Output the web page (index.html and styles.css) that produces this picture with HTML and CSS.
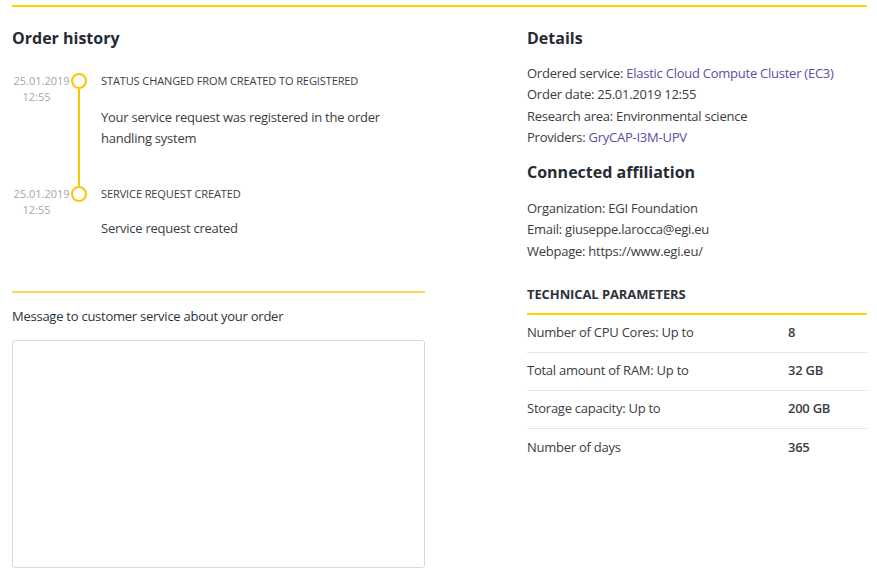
FILE: index.html
```html
<!DOCTYPE html>
<html lang="en">
<head>
<meta charset="utf-8">
<title>Order</title>
<link rel="stylesheet" href="styles.css">
</head>
<body>
<div class="page">
  <div class="layout">
    <section class="left">
      <h2 class="heading">Order history</h2>
      <ul class="timeline">
        <li class="event">
          <div class="when">25.01.2019<br><span class="time">12:55</span></div>
          <div class="marker"><span class="dot"></span><span class="line"></span></div>
          <div class="what">
            <div class="status">STATUS CHANGED FROM CREATED TO REGISTERED</div>
            <p class="msg">Your service request was registered in the order handling system</p>
          </div>
        </li>
        <li class="event last">
          <div class="when">25.01.2019<br><span class="time">12:55</span></div>
          <div class="marker"><span class="dot"></span></div>
          <div class="what">
            <div class="status">SERVICE REQUEST CREATED</div>
            <p class="msg">Service request created</p>
          </div>
        </li>
      </ul>
      <div class="message">
        <label class="msg-label" for="m">Message to customer service about your order</label>
        <textarea id="m" class="msg-box"></textarea>
      </div>
    </section>
    <section class="right">
      <h2 class="heading">Details</h2>
      <ul class="info">
        <li>Ordered service: <a class="link" href="#">Elastic Cloud Compute Cluster (EC3)</a></li>
        <li>Order date: 25.01.2019 12:55</li>
        <li>Research area: Environmental science</li>
        <li>Providers: <a class="link" href="#">GryCAP-I3M-UPV</a></li>
      </ul>
      <h2 class="heading sub">Connected affiliation</h2>
      <ul class="info aff">
        <li>Organization: EGI Foundation</li>
        <li>Email: giuseppe.larocca@egi.eu</li>
        <li>Webpage: https://www.egi.eu/</li>
      </ul>
      <h3 class="tech-title">TECHNICAL PARAMETERS</h3>
      <div class="params">
        <div class="prow"><span class="pname">Number of CPU Cores: Up to</span><span class="pval">8</span></div>
        <div class="prow"><span class="pname">Total amount of RAM: Up to</span><span class="pval">32 GB</span></div>
        <div class="prow"><span class="pname">Storage capacity: Up to</span><span class="pval">200 GB</span></div>
        <div class="prow"><span class="pname">Number of days</span><span class="pval">365</span></div>
      </div>
    </section>
  </div>
</div>
</body>
</html>
```

FILE: styles.css
```css
* { box-sizing: border-box; }
html, body { margin: 0; padding: 0; background: #fff; }
body {
  font-family: "Open Sans", "Noto Sans", sans-serif;
  color: #3a3d42;
  font-size: 13px;
  letter-spacing: -0.25px;
}
.page {
  padding: 0 10px 0 12px;
}
.layout {
  border-top: 2px solid #ffd200;
  margin-top: 5px;
  display: grid;
  grid-template-columns: 413px 340px;
  column-gap: 102px;
}
.heading {
  margin: 0;
  font-size: 16px;
  font-weight: 700;
  color: #262b33;
  line-height: 20px;
  letter-spacing: 0;
}
.left .heading, .right > .heading:first-child { margin-top: 21px; }
.timeline {
  list-style: none;
  margin: 22px 0 0 0;
  padding: 0;
}
.event {
  display: flex;
  align-items: stretch;
}
.when {
  width: 59px;
  flex: none;
  text-align: center;
  font-size: 11px;
  line-height: 16px;
  color: #a3a6ab;
  padding-top: 3px;
  white-space: nowrap;
  letter-spacing: 0;
}
.time { padding-right: 10px; }
.marker {
  width: 16px;
  flex: none;
  display: flex;
  flex-direction: column;
  align-items: center;
  margin-right: 14px;
}
.dot {
  width: 16px;
  height: 16px;
  border: 2px solid #ffc400;
  border-radius: 50%;
  flex: none;
  margin-top: 3px;
}
.line {
  width: 2px;
  flex: 1;
  background: #ffc400;
  margin-bottom: -3px;
}
.what { flex: 1; padding-bottom: 34px; }
.last .what { padding-bottom: 52px; }
.status {
  font-size: 11px;
  line-height: 22px;
  color: #3a3d42;
  letter-spacing: -0.1px;
}
.msg {
  margin: 15px 0 0 0;
  font-size: 13px;
  line-height: 21px;
  color: #3a3d42;
}
.last .msg { margin-top: 13px; }
.message {
  border-top: 2px solid #ffd84d;
  padding-top: 14px;
}
.msg-label {
  display: block;
  font-size: 13px;
  line-height: 18px;
  color: #2e3238;
}
.msg-box {
  display: block;
  margin-top: 15px;
  width: 100%;
  height: 228px;
  border: 1px solid #d6d9de;
  border-radius: 3px;
  resize: none;
  font-family: inherit;
}
.info {
  list-style: none;
  margin: 15px 0 0 0;
  padding: 0;
  line-height: 21.3px;
  font-size: 13px;
  color: #3a3d42;
}
.info.aff { margin-top: 16px; }
.link { color: #5a4ea8; text-decoration: none; }
.heading.sub { margin-top: 14px; }
.tech-title {
  margin: 23px 0 0 0;
  font-size: 13px;
  font-weight: 700;
  color: #2e3238;
  line-height: 18px;
  padding-bottom: 10px;
  border-bottom: 2px solid #ffd200;
  letter-spacing: -0.1px;
}
.prow {
  display: flex;
  height: 38px;
  align-items: center;
  padding-bottom: 3px;
  border-bottom: 1px solid #e3e5e8;
  font-size: 13px;
}
.prow:last-child { border-bottom: none; }
.pname { width: 261px; flex: none; color: #3a3d42; }
.pval { color: #3a3d42; font-weight: 600; }
```
